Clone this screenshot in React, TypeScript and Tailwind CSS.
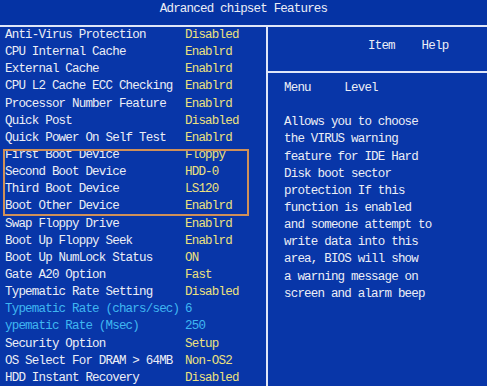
import React from "react";

type Row = { label: string; value: string; cyan?: boolean };

const rows: Row[] = [
  { label: "Anti-Virus Protection", value: "Disabled" },
  { label: "CPU Internal Cache", value: "Enablrd" },
  { label: "External Cache", value: "Enablrd" },
  { label: "CPU L2 Cache ECC Checking", value: "Enablrd" },
  { label: "Processor Number Feature", value: "Enablrd" },
  { label: "Quick Post", value: "Disabled" },
  { label: "Quick Power On Self Test", value: "Enablrd" },
];

const boxed: Row[] = [
  { label: "First Boot Device", value: "Floppy" },
  { label: "Second Boot Device", value: "HDD-0" },
  { label: "Third Boot Device", value: "LS120" },
  { label: "Boot Other Device", value: "Enablrd" },
];

const rest: Row[] = [
  { label: "Swap Floppy Drive", value: "Enablrd" },
  { label: "Boot Up Floppy Seek", value: "Enablrd" },
  { label: "Boot Up NumLock Status", value: "ON" },
  { label: "Gate A20 Option", value: "Fast" },
  { label: "Typematic Rate Setting", value: "Disabled" },
  { label: "Typematic Rate (chars/sec)", value: "6", cyan: true },
  { label: "ypematic Rate (Msec)", value: "250", cyan: true },
  { label: "Security Option", value: "Setup" },
  { label: "OS Select For DRAM > 64MB", value: "Non-OS2" },
  { label: "HDD Instant Recovery", value: "Disabled" },
];

const help = [
  "Allows you to choose",
  "the VIRUS warning",
  "feature for IDE Hard",
  "Disk boot sector",
  "protection If this",
  "function is enabled",
  "and someone attempt to",
  "write data into this",
  "area, BIOS will show",
  "a warning message on",
  "screen and alarm beep",
];

function RowLine({ r }: { r: Row }) {
  return (
    <div className="flex h-[17.15px] items-center whitespace-pre pl-[5px]">
      <span className={"w-[180px] " + (r.cyan ? "text-[#3fb6f2]" : "text-[#eceef6]")}>{r.label}</span>
      <span className={r.cyan ? "text-[#3fb6f2]" : "text-[#ece17e]"}>{r.value}</span>
    </div>
  );
}

export default function App() {
  return (
    <div
      className="h-[386px] w-[487px] overflow-hidden bg-[#0836a8] text-[12.5px] leading-[17.15px] tracking-[-0.8px] text-[#eceef6]"
      style={{ fontFamily: '"Liberation Mono", "DejaVu Sans Mono", monospace' }}
    >
      <div className="flex h-[25px] justify-center bg-[#0533a4] pt-[1px] leading-[17px]">
        <span className="whitespace-pre">Adranced chipset Features</span>
      </div>
      <div className="h-[2px] bg-[#dfe6f8]" />
      <div className="flex">
        <div className="w-[266px] shrink-0">
          {rows.map((r) => (
            <RowLine key={r.label} r={r} />
          ))}
          <div className="relative">
            {boxed.map((r) => (
              <RowLine key={r.label} r={r} />
            ))}
            <div className="pointer-events-none absolute left-[3px] top-[2px] bottom-0 w-[246px] border-2 border-[#d09058]" />
          </div>
          {rest.map((r) => (
            <RowLine key={r.label} r={r} />
          ))}
        </div>
        <div className="w-[2px] shrink-0 self-stretch bg-[#dfe6f8]" />
        <div className="flex-1">
          <div className="flex h-[44px] items-center whitespace-pre pl-[100px] pb-[4px]">Item    Help</div>
          <div className="h-[2px] bg-[#dfe6f8]" />
          <div className="pl-[16px] pt-[7px]">
            <div className="whitespace-pre">Menu     Level</div>
            <div className="h-[17.15px]" />
            {help.map((l) => (
              <div key={l} className="h-[17.15px] whitespace-pre">
                {l}
              </div>
            ))}
          </div>
        </div>
      </div>
    </div>
  );
}
